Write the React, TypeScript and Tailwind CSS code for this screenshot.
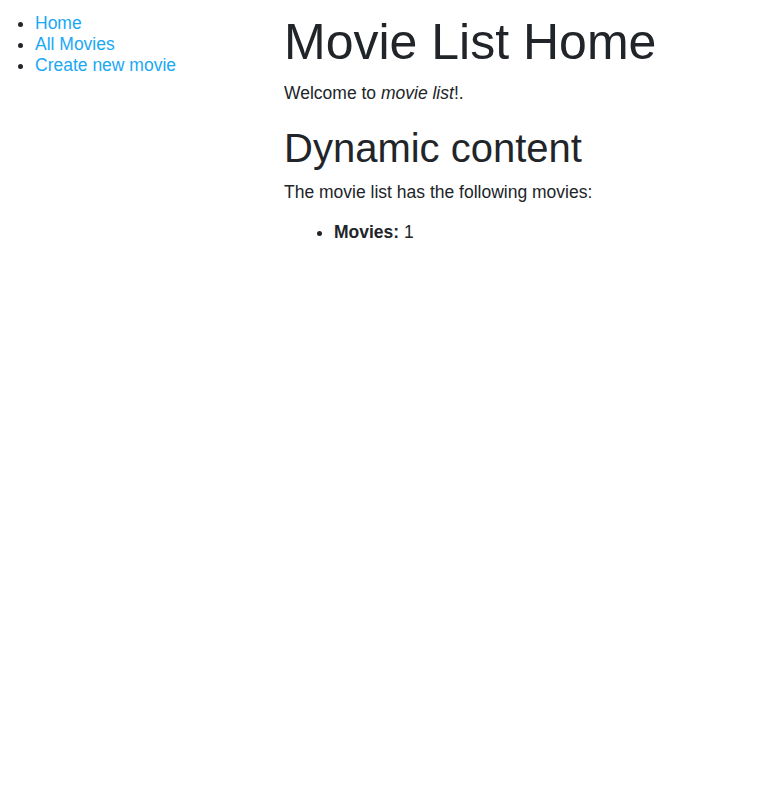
export default function App() {
  return (
    <div className="min-h-[812px] bg-white text-[#212529] font-['Liberation_Sans',Arial,sans-serif] text-[17.5px] leading-[26.25px]">
      <div className="flex pt-3">
        {/* Sidebar */}
        <div className="w-[269px] shrink-0 pl-[15px] pt-px">
          <ul className="list-disc pl-5 leading-[21px]">
            <li>
              <a href="#" className="text-[#1aa8f5]">Home</a>
            </li>
            <li>
              <a href="#" className="text-[#1aa8f5]">All Movies</a>
            </li>
            <li>
              <a href="#" className="text-[#1aa8f5]">Create new movie</a>
            </li>
          </ul>
        </div>

        {/* Content */}
        <div className="pl-[15px]">
          <h1 className="text-[50px] leading-[60px] mb-2">Movie List Home</h1>
          <p className="mb-[18px]">
            Welcome to <em>movie list</em>!.
          </p>
          <h2 className="text-[40px] leading-[48px] mb-[7px]">Dynamic content</h2>
          <p className="mb-[13px]">The movie list has the following movies:</p>
          <ul className="list-disc pl-[50px]">
            <li>
              <strong>Movies:</strong> 1
            </li>
          </ul>
        </div>
      </div>
    </div>
  );
}
